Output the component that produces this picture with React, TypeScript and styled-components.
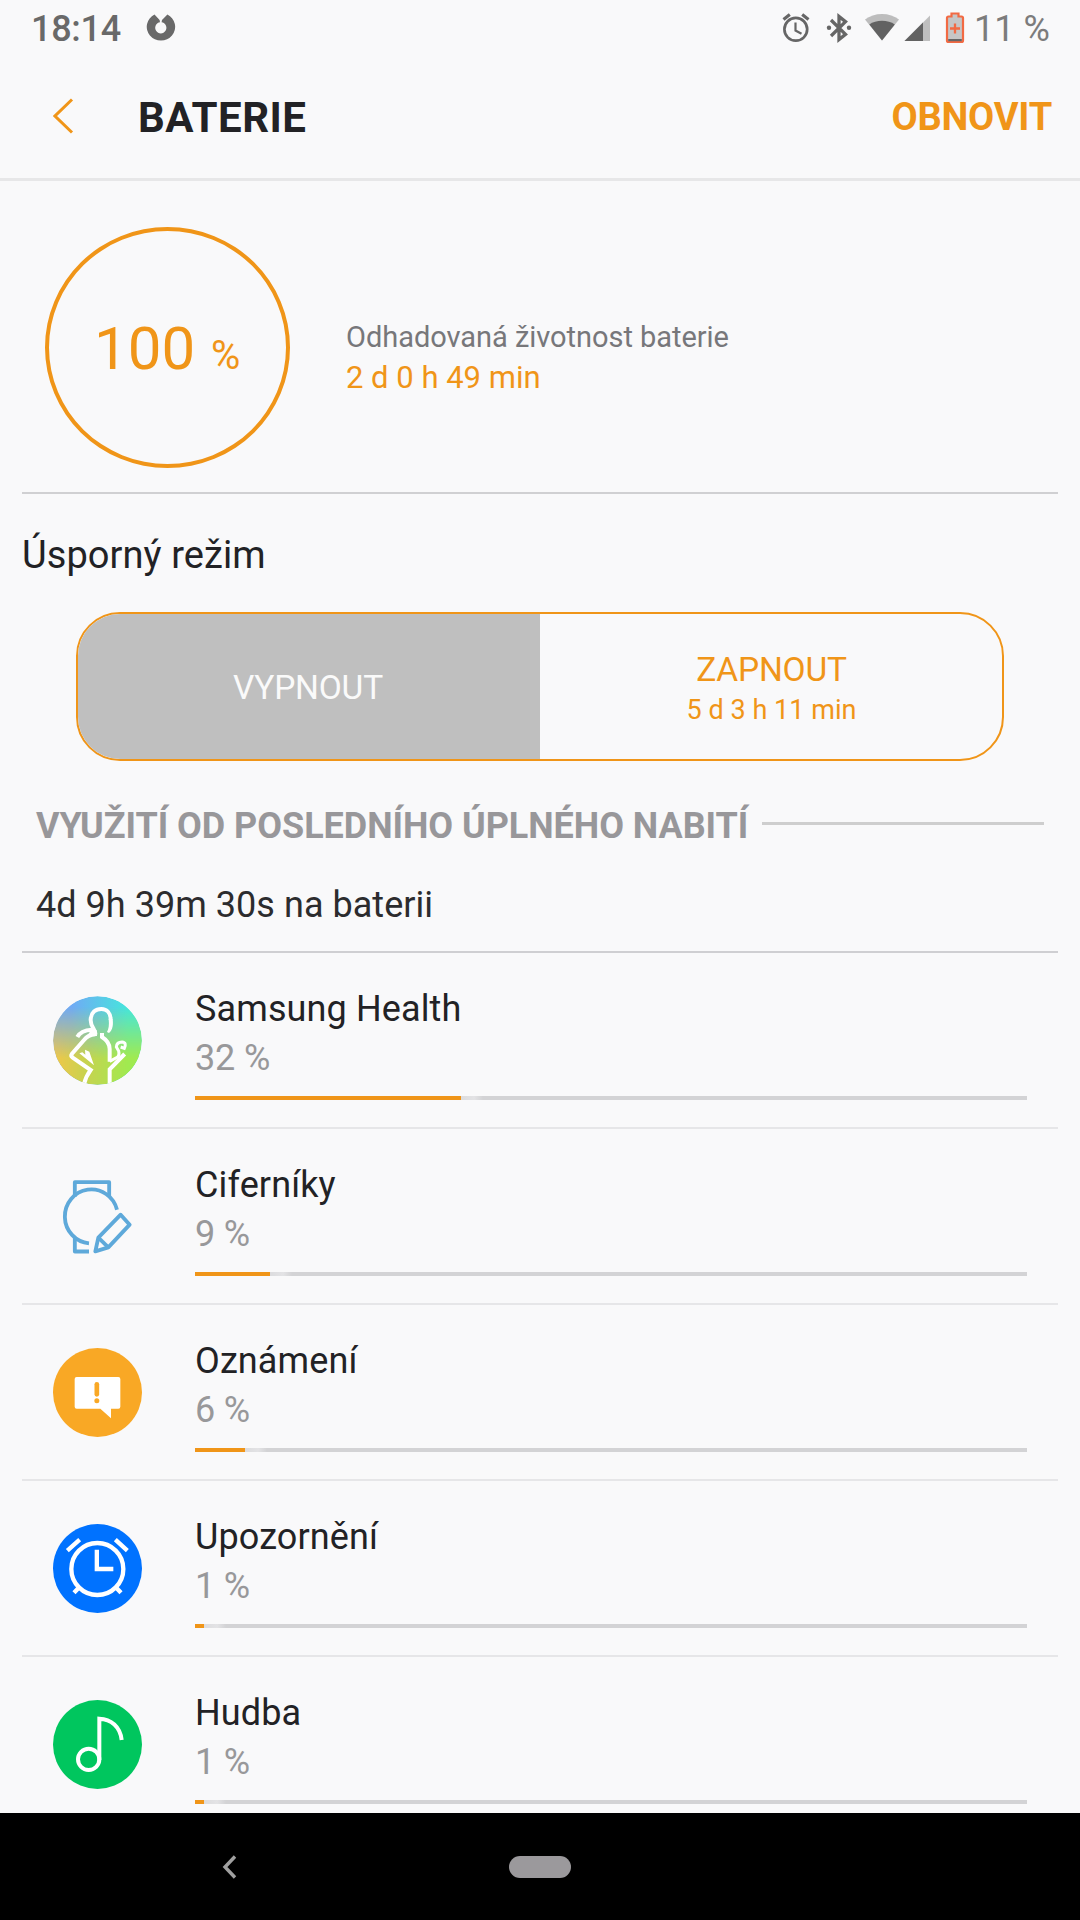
import React from "react";
import styled, { createGlobalStyle } from "styled-components";

const ORANGE = "#f09518";

const GlobalStyle = createGlobalStyle`
  * { box-sizing: border-box; }
  html, body { margin: 0; padding: 0; background: #f9f9fa; }
  body { font-family: Roboto, "Noto Sans", sans-serif; }
  svg { display: block; flex: none; }
`;

const Screen = styled.div`
  width: 1080px;
  height: 1920px;
  display: flex;
  flex-direction: column;
  overflow: hidden;
  background: #f9f9fa;
  color: #222225;
`;

const StatusBar = styled.div`
  height: 56px;
  flex: none;
  display: flex;
  align-items: center;
  padding: 0 28px 0 31px;
  color: #696969;
`;

const Clock = styled.span`
  width: 115px;
  padding-top: 1px;
  font-size: 36px;
  font-weight: 500;
  line-height: 56px;
  letter-spacing: -0.3px;
`;

const StatusIcons = styled.div`
  margin-left: auto;
  display: flex;
  align-items: center;
`;

const BatteryLevel = styled.span`
  width: 82px;
  padding: 2px 0 0 4px;
  font-size: 36px;
  line-height: 56px;
  letter-spacing: 0;
  color: #7c7c7c;
  white-space: nowrap;
`;

const Header = styled.header`
  height: 125px;
  flex: none;
  display: flex;
  align-items: center;
  padding: 0 28px 3px 53px;
  border-bottom: 3px solid #e7e7e8;
`;

const Title = styled.h1`
  margin: 0 auto 0 64px;
  padding-top: 4px;
  font-size: 42px;
  font-weight: 700;
  line-height: 50px;
  letter-spacing: 0.5px;
`;

const RefreshButton = styled.button`
  border: 0;
  padding: 3px 0 0;
  background: none;
  font: 700 38px/50px Roboto, sans-serif;
  letter-spacing: -0.2px;
  color: ${ORANGE};
`;

const Content = styled.main`
  flex: 1;
  min-height: 0;
  overflow: hidden;
  padding: 0 22px;
`;

const Summary = styled.section`
  height: 313px;
  display: flex;
  align-items: flex-start;
  padding: 46px 0 0 23px;
  border-bottom: 2px solid #d0d0d2;
`;

const Gauge = styled.div`
  width: 245px;
  height: 241px;
  display: flex;
  align-items: baseline;
  padding: 83px 0 0 45px;
  border: 4px solid ${ORANGE};
  border-radius: 50%;
  color: ${ORANGE};
`;

const GaugeValue = styled.span`
  width: 117px;
  font-size: 60px;
  line-height: 70px;
`;

const GaugeUnit = styled.span`
  font-size: 40px;
`;

const Estimate = styled.div`
  padding: 90px 0 0 56px;
  white-space: nowrap;
`;

const EstimateLabel = styled.div`
  font-size: 29px;
  line-height: 40px;
  letter-spacing: -0.04px;
  color: #77777a;
`;

const EstimateValue = styled.div`
  font-size: 31px;
  line-height: 41px;
  color: ${ORANGE};
`;

const ModeTitle = styled.h2`
  margin: 37px 0 33px;
  font-size: 38px;
  font-weight: 400;
  line-height: 48px;
  letter-spacing: 0.08px;
`;

const Toggle = styled.div`
  height: 149px;
  margin: 0 54px;
  display: grid;
  grid-template-columns: 1fr 1fr;
  border: 2px solid ${ORANGE};
  border-radius: 44px;
  overflow: hidden;
`;

const ToggleOption = styled.div<{ $active?: boolean }>`
  display: flex;
  flex-direction: column;
  align-items: center;
  justify-content: center;
  font-size: 33.5px;
  line-height: 42px;
  letter-spacing: -0.2px;
  background: ${(p) => (p.$active ? "#bfbfbf" : "transparent")};
  color: ${(p) => (p.$active ? "#fafafa" : ORANGE)};
  padding: ${(p) => (p.$active ? "3px 2px 0 0" : "5px 0 0 1px")};
`;

const ToggleNote = styled.span`
  font-size: 27px;
  line-height: 38px;
  letter-spacing: 0.05px;
`;

const SectionHeading = styled.div`
  height: 48px;
  margin: 41px 14px 0;
  display: flex;
  align-items: center;
  gap: 14px;
  font-size: 36px;
  font-weight: 700;
  line-height: 48px;
  letter-spacing: -0.05px;
  color: #98979a;
  white-space: nowrap;

  &::after {
    content: "";
    flex: 1;
    height: 3px;
    margin-bottom: 5px;
    background: #cecece;
  }
`;

const UsageTime = styled.div`
  height: 103px;
  padding: 31px 14px 0;
  font-size: 36px;
  line-height: 48px;
  letter-spacing: 0.04px;
  color: #2c2c2e;
  border-bottom: 2px solid #cfcfd2;
`;

const Row = styled.div`
  height: 176px;
  display: flex;
  border-bottom: 2px solid #e6e6e8;
`;

const IconSlot = styled.div`
  width: 173px;
  flex: none;
  padding: 43px 0 0 31px;
`;

const RowBody = styled.div`
  width: 832px;
  padding-top: 32px;
`;

const AppName = styled.div`
  font-size: 36px;
  line-height: 48px;
  letter-spacing: 0.12px;
`;

const AppPercent = styled.div`
  padding-top: 1px;
  font-size: 36px;
  line-height: 49px;
  letter-spacing: -0.15px;
  color: #98989a;
`;

const Track = styled.div`
  height: 4px;
  margin-top: 13px;
  display: flex;
  background: #d3d3d5;

  &::after {
    content: "";
    width: 22px;
    background: linear-gradient(90deg, #dcdcde, #e3e3e5 60%, #d3d3d5);
  }
`;

const Fill = styled.div`
  min-width: 9px;
  background: ${ORANGE};
`;

const NavBar = styled.nav`
  height: 107px;
  flex: none;
  display: flex;
  align-items: center;
  padding: 0 0 0 222px;
  background: #000;
`;

const HomePill = styled.div`
  width: 62px;
  height: 22px;
  margin-left: 271px;
  border-radius: 11px;
  background: #9b999c;
`;

const AppBadge = () => (
  <svg width="30" height="30" viewBox="0 0 30 30" fill="#696969">
    <path d="M8.500 1.500L13.600 7L14 9.300A5.600 5.600 0 1 0 15.600 9.300L16 7L21.400 1.500A14.200 13.800 0 1 1 8.500 1.500Z" />
  </svg>
);

const StatusGlyphs = () => (
  <svg width="190" height="34" viewBox="780 10 190 34">
    <g fill="none" stroke="#666" strokeWidth="2.700">
      <circle cx="795.800" cy="28.300" r="11.400" />
      <path d="M795.500 21.500V29.500L801.500 32.700" strokeWidth="2.200" />
      <path d="M783.500 18.500L789.800 13.600M808.500 18.500L802.200 13.600" strokeWidth="3.200" />
      <path d="M831 19L845.500 33.300L839 38.500V15.500L845.500 20.700L831 35" strokeWidth="3.300" />
    </g>
    <circle cx="829" cy="26.700" r="2.200" fill="#666" />
    <circle cx="849" cy="26.700" r="2.200" fill="#666" />
    <path d="M865 18.500C874 11 890 11 899 18.500L882 39.500Z" fill="#bdbdbd" />
    <path d="M869.300 23.500C876 18.500 888 18.500 894.800 23.500L882 39.500Z" fill="#626262" />
    <path d="M904.500 40L930 14.500V40Z" fill="#bfbfbf" />
    <path d="M904.500 40L923 21.500V40Z" fill="#626262" />
    <path
      d="M951.500 12.500H958.500V15.500H961.500Q963 15.500 963 17V39.500Q963 41 961.500 41H948.500Q947 41 947 39.500V17Q947 15.500 948.500 15.500H951.500Z"
      fill="#c6c6c6"
      stroke="#f26a43"
      strokeWidth="2.200"
    />
    <path d="M948.200 38H961.800V40.200H948.200Z" fill="#666" />
    <path d="M955 22.500V32.500M950 27.500H960" stroke="#f26a43" strokeWidth="2.300" />
  </svg>
);

const HealthIcon = () => (
  <svg width="89" height="89" viewBox="9 11 267 267">
    <defs>
      <linearGradient id="sky">
        <stop offset="0.200" stopColor="#70aaf5" />
        <stop offset="0.850" stopColor="#45e6dc" />
      </linearGradient>
      <linearGradient id="field">
        <stop offset="0" stopColor="#f2c64a" />
        <stop offset="0.400" stopColor="#c4d44f" />
        <stop offset="0.850" stopColor="#a0ea50" />
      </linearGradient>
      <linearGradient id="fade" x1="0" y1="0" x2="0" y2="1">
        <stop offset="0.120" stopColor="#000" />
        <stop offset="0.700" stopColor="#fff" />
      </linearGradient>
      <mask id="lower">
        <rect x="9" y="11" width="267" height="267" fill="url(#fade)" />
      </mask>
      <clipPath id="disc">
        <circle cx="142.500" cy="144.500" r="133" />
      </clipPath>
    </defs>
    <g clipPath="url(#disc)">
      <circle cx="142.500" cy="144.500" r="133.500" fill="url(#sky)" />
      <circle cx="142.500" cy="144.500" r="133.500" fill="url(#field)" mask="url(#lower)" />
      <g fill="none" stroke="#fff" strokeWidth="12">
        <path d="M136 126C138 112 121 104 122 82C123 60 137 50 154 50C171 50 182 63 182 82" />
        <path d="M136 126C120 127 110 133 102 143L66 184Q61 191 68 196L122 233C112 246 106 258 102 276" />
        <path d="M82 134C90 118 106 113 126 112" />
        <path d="M156 122V134C172 144 179 155 179 170V208" />
        <path d="M179 207L203 194Q209 188 206 176L199 164C200 152 208 149 216 149C227 150 228 158 223 168L212 164" strokeWidth="9" />
        <path d="M224 185L179 231V276" />
      </g>
      <path d="M176 80L188 80C190 96 189 112 177 122L171 119C176 110 178 98 176 80Z" fill="#fff" />
      <path d="M126 108L140 114L141 131L112 131Z" fill="#fff" />
      <path d="M88 183L97 180L106 187L105 172L118 178L132 219Z" fill="#fff" />
    </g>
  </svg>
);

const WatchIcon = () => (
  <svg width="89" height="89" viewBox="-1 0 267 267" fill="none" stroke="#5ea9da" strokeWidth="11.500" strokeLinejoin="round">
    <path d="M64.500 74V30.500H167.500V74" />
    <path d="M191 113A79.500 81 0 1 0 107 214" />
    <path d="M64.500 196V238.500H107" />
    <path d="M202 128L229 158L165 226L126 238L135 197Z" />
    <path d="M135 197L165 226" />
  </svg>
);

const NoticeIcon = () => (
  <svg width="89" height="89" viewBox="0 0 267 267">
    <circle cx="133.500" cy="133.500" r="133.500" fill="#f9a825" />
    <path d="M71 87H196Q202 87 202 93V176Q202 182 196 182H174V211L142 182H71Q65 182 65 176V93Q65 87 71 87Z" fill="#fff" />
    <path d="M131.500 109V139" stroke="#f9a825" strokeWidth="14" strokeLinecap="round" />
    <circle cx="131.500" cy="158" r="7.500" fill="#f9a825" />
  </svg>
);

const AlarmIcon = () => (
  <svg width="89" height="89" viewBox="0 0 267 267" fill="none" stroke="#fff" strokeWidth="13">
    <circle cx="133.500" cy="133.500" r="133.500" fill="#0072ff" stroke="none" />
    <circle cx="133" cy="135" r="78" />
    <path d="M131.500 77V135H181" />
    <path d="M43 80L80 47M187 47L223 80" />
    <path d="M63 206L80 188M187 188L204 206" />
  </svg>
);

const MusicIcon = () => (
  <svg width="89" height="89" viewBox="0 0 267 267" fill="none" stroke="#fff" strokeWidth="12">
    <circle cx="133.500" cy="133.500" r="133.500" fill="#00c65e" stroke="none" />
    <circle cx="107" cy="178" r="32" />
    <path d="M139 180V56C174 57 202 80 206 120" />
  </svg>
);

const apps = [
  { name: "Samsung Health", percent: 32, Icon: HealthIcon },
  { name: "Ciferníky", percent: 9, Icon: WatchIcon },
  { name: "Oznámení", percent: 6, Icon: NoticeIcon },
  { name: "Upozornění", percent: 1, Icon: AlarmIcon },
  { name: "Hudba", percent: 1, Icon: MusicIcon },
];

export default function App() {
  return (
    <Screen>
      <GlobalStyle />
      <StatusBar>
        <Clock>18:14</Clock>
        <AppBadge />
        <StatusIcons>
          <StatusGlyphs />
          <BatteryLevel>11 %</BatteryLevel>
        </StatusIcons>
      </StatusBar>
      <Header>
        <svg width="21" height="36" viewBox="0 0 21 36" fill="none" stroke={ORANGE} strokeWidth="3">
          <path d="M19 1.500L2 18L19 34.500" />
        </svg>
        <Title>BATERIE</Title>
        <RefreshButton>OBNOVIT</RefreshButton>
      </Header>
      <Content>
        <Summary>
          <Gauge>
            <GaugeValue>100</GaugeValue>
            <GaugeUnit>%</GaugeUnit>
          </Gauge>
          <Estimate>
            <EstimateLabel>Odhadovaná životnost baterie</EstimateLabel>
            <EstimateValue>2 d 0 h 49 min</EstimateValue>
          </Estimate>
        </Summary>
        <ModeTitle>Úsporný režim</ModeTitle>
        <Toggle>
          <ToggleOption $active>VYPNOUT</ToggleOption>
          <ToggleOption>
            ZAPNOUT
            <ToggleNote>5 d 3 h 11 min</ToggleNote>
          </ToggleOption>
        </Toggle>
        <SectionHeading>VYUŽITÍ OD POSLEDNÍHO ÚPLNÉHO NABITÍ</SectionHeading>
        <UsageTime>4d 9h 39m 30s na baterii</UsageTime>
        {apps.map(({ name, percent, Icon }) => (
          <Row key={name}>
            <IconSlot>
              <Icon />
            </IconSlot>
            <RowBody>
              <AppName>{name}</AppName>
              <AppPercent>{percent} %</AppPercent>
              <Track>
                <Fill style={{ width: `${percent}%` }} />
              </Track>
            </RowBody>
          </Row>
        ))}
      </Content>
      <NavBar>
        <svg width="16" height="24" viewBox="0 0 16 24" fill="none" stroke="#a0a0a0" strokeWidth="3.400">
          <path d="M13 1.500L3 12L13 22.500" />
        </svg>
        <HomePill />
      </NavBar>
    </Screen>
  );
}
